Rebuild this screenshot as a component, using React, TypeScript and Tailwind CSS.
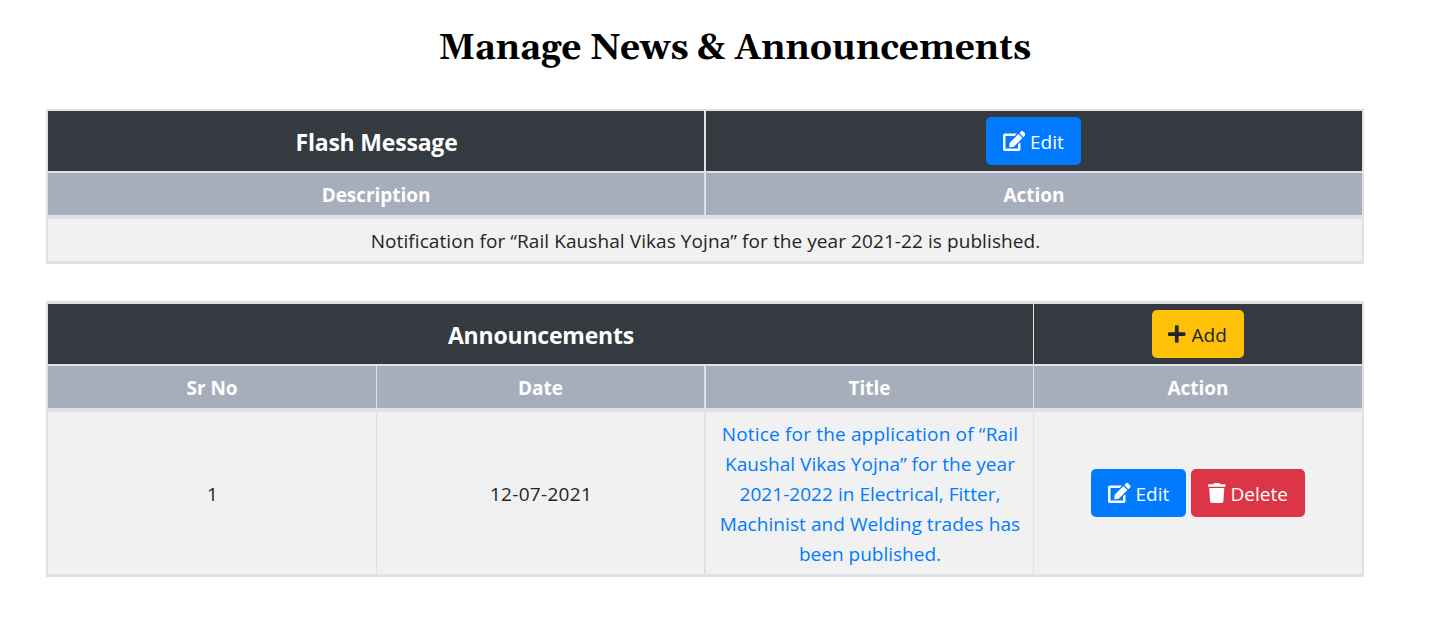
import type { ReactNode } from "react";
import { FaEdit, FaPlus, FaTrash } from "react-icons/fa";

const noticeLines = [
  { text: "Notice for the application of “Rail", tracking: "tracking-[0.17px]" },
  { text: "Kaushal Vikas Yojna” for the year", tracking: "tracking-[0.02px]" },
  { text: "2021-2022 in Electrical, Fitter,", tracking: "tracking-[0.04px]" },
  { text: "Machinist and Welding trades has", tracking: "tracking-[0.07px]" },
  { text: "been published.", tracking: "tracking-[0.01px]" },
];

function Cell({ className = "", children }: { className?: string; children?: ReactNode }) {
  return <div className={`flex items-center justify-center text-center ${className}`}>{children}</div>;
}

function SectionTitle({ children }: { children: ReactNode }) {
  return (
    <Cell className="bg-[#343a40] pl-px pt-[2px] text-[23px] font-bold leading-9 tracking-[-0.2px] text-white">
      {children}
    </Cell>
  );
}

function HeadCell({ children }: { children: ReactNode }) {
  return <Cell className="bg-[#a7aebb] pt-[2px] font-bold tracking-[-0.05px] text-white">{children}</Cell>;
}

function Button({ className, icon, children }: { className: string; icon: ReactNode; children: ReactNode }) {
  return (
    <button type="button" className={`flex h-12 items-center rounded-[5px] ${className}`}>
      {icon}
      <span className="pt-[2px]">{children}</span>
    </button>
  );
}

function EditButton() {
  return (
    <Button
      className="w-[95px] bg-[#007bff] pl-[17px] text-white"
      icon={<FaEdit className="mr-[5px] h-[20px] w-[22.5px]" />}
    >
      Edit
    </Button>
  );
}

export default function App() {
  return (
    <div className="min-h-[644px] w-[1442px] bg-white font-['Segoe_UI','Open_Sans','Noto_Sans',sans-serif] text-[19px] leading-[30px] text-[#212529]">
      <h1 className="flex h-[109px] justify-center pl-[28px] pt-[27px] font-[Georgia,Gelasio,'Liberation_Serif',serif] text-[35.2px] font-bold leading-[44px] text-black">
        Manage News &amp; Announcements
      </h1>

      <section className="ml-[46px] grid w-[1318px] border-2 border-b-[3px] border-[#dee2e6] bg-[#dee2e6]">
        <div className="mb-[2px] grid h-[60px] grid-cols-[656px_656px] gap-x-[2px]">
          <SectionTitle>Flash Message</SectionTitle>
          <Cell className="bg-[#343a40] pr-[2px]">
            <EditButton />
          </Cell>
        </div>
        <div className="mb-1 grid h-[42px] grid-cols-[656px_656px] gap-x-[2px]">
          <HeadCell>Description</HeadCell>
          <HeadCell>Action</HeadCell>
        </div>
        <Cell className="h-[42px] bg-[#f1f1f1] pl-px pt-[2px] tracking-[0.08px]">
          Notification for “Rail Kaushal Vikas Yojna” for the year 2021-22 is published.
        </Cell>
      </section>

      <section className="ml-[46px] mt-[37px] grid w-[1318px] border-2 border-y-[3px] border-[#dee2e6] bg-[#dee2e6]">
        <div className="mb-[2px] grid h-[60px] grid-cols-[985px_328px] gap-x-px">
          <SectionTitle>Announcements</SectionTitle>
          <Cell className="bg-[#343a40]">
            <Button
              className="w-[92px] bg-[#ffc107] pl-4 text-[#212529]"
              icon={<FaPlus className="mr-[6px] h-[20px] w-[17.5px]" />}
            >
              Add
            </Button>
          </Cell>
        </div>
        <div className="mb-1 flex h-[42px] gap-[2px]">
          <div className="grid grid-cols-[328px_327px] gap-px">
            <HeadCell>Sr No</HeadCell>
            <HeadCell>Date</HeadCell>
          </div>
          <div className="grid grid-cols-[327px_328px] gap-px">
            <HeadCell>Title</HeadCell>
            <HeadCell>Action</HeadCell>
          </div>
        </div>
        <div className="flex h-[162px] gap-[2px]">
          <div className="grid grid-cols-[328px_327px] gap-px">
            <Cell className="bg-[#f1f1f1] pl-px pt-[2px]">1</Cell>
            <Cell className="bg-[#f1f1f1] pl-px pt-[2px] tracking-[0.3px]">12-07-2021</Cell>
          </div>
          <div className="grid grid-cols-[327px_328px] gap-px">
            <Cell className="bg-[#f1f1f1] pl-px pt-[2px]">
              <a className="flex flex-col items-center whitespace-nowrap text-[#007bff]">
                {noticeLines.map((line) => (
                  <span key={line.text} className={line.tracking}>
                    {line.text}
                  </span>
                ))}
              </a>
            </Cell>
            <Cell className="gap-[5px] bg-[#f1f1f1]">
              <EditButton />
              <Button
                className="w-[114px] bg-[#dc3545] pl-[17px] text-white"
                icon={<FaTrash className="mr-[5px] h-[20px] w-[17.5px]" />}
              >
                Delete
              </Button>
            </Cell>
          </div>
        </div>
      </section>
    </div>
  );
}
